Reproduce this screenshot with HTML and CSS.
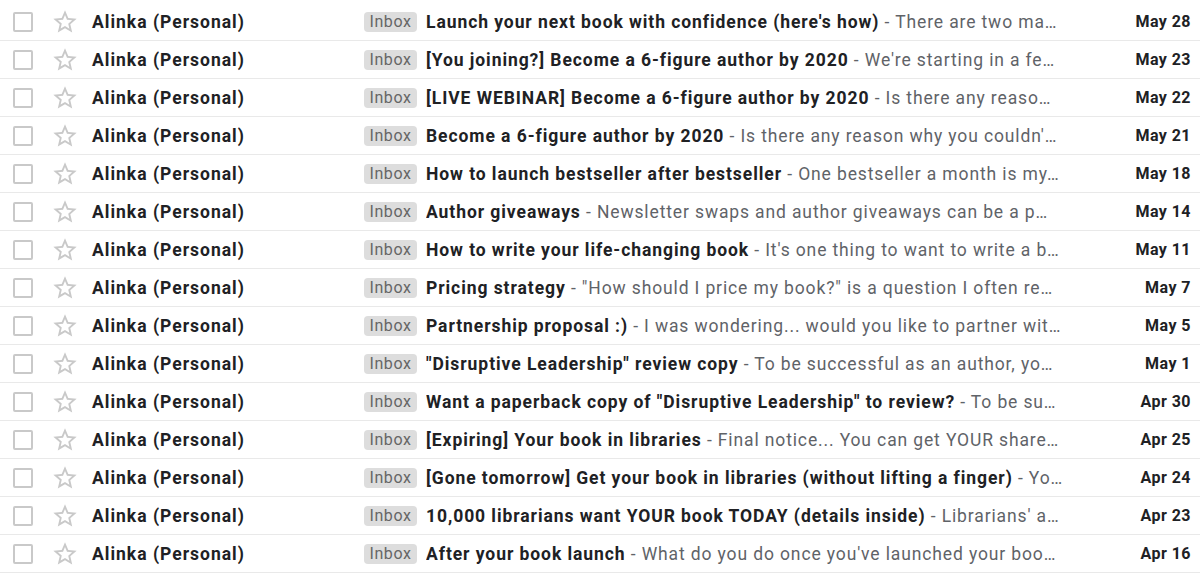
FILE: index.html
```html
<!DOCTYPE html>
<html>
<head>
  <title>Inbox</title>
  <link rel="stylesheet" href="styles.css">
</head>
<body>
  <div class="mail-list">
    <div class="mail-row">
      <span class="mail-check"></span>
      <svg class="mail-star" viewBox="0 0 24 24"><path d="M22 9.24l-7.19-.62L12 2 9.19 8.63 2 9.24l5.46 4.73L5.82 21 12 17.27 18.18 21l-1.63-7.03L22 9.24zM12 15.4l-3.76 2.27 1-4.28-3.32-2.88 4.38-.38L12 6.1l1.71 4.04 4.38.38-3.32 2.88 1 4.28L12 15.4z"/></svg>
      <span class="mail-sender">Alinka (Personal)</span>
      <span class="mail-label">Inbox</span>
      <span class="mail-text"><span class="mail-subject">Launch your next book with confidence (here's how)</span><span class="mail-snippet"> - There are two ma…</span></span>
      <span class="mail-date">May 28</span>
    </div>
    <div class="mail-row">
      <span class="mail-check"></span>
      <svg class="mail-star" viewBox="0 0 24 24"><path d="M22 9.24l-7.19-.62L12 2 9.19 8.63 2 9.24l5.46 4.73L5.82 21 12 17.27 18.18 21l-1.63-7.03L22 9.24zM12 15.4l-3.76 2.27 1-4.28-3.32-2.88 4.38-.38L12 6.1l1.71 4.04 4.38.38-3.32 2.88 1 4.28L12 15.4z"/></svg>
      <span class="mail-sender">Alinka (Personal)</span>
      <span class="mail-label">Inbox</span>
      <span class="mail-text"><span class="mail-subject">[You joining?] Become a 6-figure author by 2020</span><span class="mail-snippet"> - We're starting in a fe…</span></span>
      <span class="mail-date">May 23</span>
    </div>
    <div class="mail-row">
      <span class="mail-check"></span>
      <svg class="mail-star" viewBox="0 0 24 24"><path d="M22 9.24l-7.19-.62L12 2 9.19 8.63 2 9.24l5.46 4.73L5.82 21 12 17.27 18.18 21l-1.63-7.03L22 9.24zM12 15.4l-3.76 2.27 1-4.28-3.32-2.88 4.38-.38L12 6.1l1.71 4.04 4.38.38-3.32 2.88 1 4.28L12 15.4z"/></svg>
      <span class="mail-sender">Alinka (Personal)</span>
      <span class="mail-label">Inbox</span>
      <span class="mail-text"><span class="mail-subject">[LIVE WEBINAR] Become a 6-figure author by 2020</span><span class="mail-snippet"> - Is there any reaso…</span></span>
      <span class="mail-date">May 22</span>
    </div>
    <div class="mail-row">
      <span class="mail-check"></span>
      <svg class="mail-star" viewBox="0 0 24 24"><path d="M22 9.24l-7.19-.62L12 2 9.19 8.63 2 9.24l5.46 4.73L5.82 21 12 17.27 18.18 21l-1.63-7.03L22 9.24zM12 15.4l-3.76 2.27 1-4.28-3.32-2.88 4.38-.38L12 6.1l1.71 4.04 4.38.38-3.32 2.88 1 4.28L12 15.4z"/></svg>
      <span class="mail-sender">Alinka (Personal)</span>
      <span class="mail-label">Inbox</span>
      <span class="mail-text"><span class="mail-subject">Become a 6-figure author by 2020</span><span class="mail-snippet"> - Is there any reason why you couldn'…</span></span>
      <span class="mail-date">May 21</span>
    </div>
    <div class="mail-row">
      <span class="mail-check"></span>
      <svg class="mail-star" viewBox="0 0 24 24"><path d="M22 9.24l-7.19-.62L12 2 9.19 8.63 2 9.24l5.46 4.73L5.82 21 12 17.27 18.18 21l-1.63-7.03L22 9.24zM12 15.4l-3.76 2.27 1-4.28-3.32-2.88 4.38-.38L12 6.1l1.71 4.04 4.38.38-3.32 2.88 1 4.28L12 15.4z"/></svg>
      <span class="mail-sender">Alinka (Personal)</span>
      <span class="mail-label">Inbox</span>
      <span class="mail-text"><span class="mail-subject">How to launch bestseller after bestseller</span><span class="mail-snippet"> - One bestseller a month is my…</span></span>
      <span class="mail-date">May 18</span>
    </div>
    <div class="mail-row">
      <span class="mail-check"></span>
      <svg class="mail-star" viewBox="0 0 24 24"><path d="M22 9.24l-7.19-.62L12 2 9.19 8.63 2 9.24l5.46 4.73L5.82 21 12 17.27 18.18 21l-1.63-7.03L22 9.24zM12 15.4l-3.76 2.27 1-4.28-3.32-2.88 4.38-.38L12 6.1l1.71 4.04 4.38.38-3.32 2.88 1 4.28L12 15.4z"/></svg>
      <span class="mail-sender">Alinka (Personal)</span>
      <span class="mail-label">Inbox</span>
      <span class="mail-text"><span class="mail-subject">Author giveaways</span><span class="mail-snippet"> - Newsletter swaps and author giveaways can be a p…</span></span>
      <span class="mail-date">May 14</span>
    </div>
    <div class="mail-row">
      <span class="mail-check"></span>
      <svg class="mail-star" viewBox="0 0 24 24"><path d="M22 9.24l-7.19-.62L12 2 9.19 8.63 2 9.24l5.46 4.73L5.82 21 12 17.27 18.18 21l-1.63-7.03L22 9.24zM12 15.4l-3.76 2.27 1-4.28-3.32-2.88 4.38-.38L12 6.1l1.71 4.04 4.38.38-3.32 2.88 1 4.28L12 15.4z"/></svg>
      <span class="mail-sender">Alinka (Personal)</span>
      <span class="mail-label">Inbox</span>
      <span class="mail-text"><span class="mail-subject">How to write your life-changing book</span><span class="mail-snippet"> - It's one thing to want to write a b…</span></span>
      <span class="mail-date">May 11</span>
    </div>
    <div class="mail-row">
      <span class="mail-check"></span>
      <svg class="mail-star" viewBox="0 0 24 24"><path d="M22 9.24l-7.19-.62L12 2 9.19 8.63 2 9.24l5.46 4.73L5.82 21 12 17.27 18.18 21l-1.63-7.03L22 9.24zM12 15.4l-3.76 2.27 1-4.28-3.32-2.88 4.38-.38L12 6.1l1.71 4.04 4.38.38-3.32 2.88 1 4.28L12 15.4z"/></svg>
      <span class="mail-sender">Alinka (Personal)</span>
      <span class="mail-label">Inbox</span>
      <span class="mail-text"><span class="mail-subject">Pricing strategy</span><span class="mail-snippet"> - "How should I price my book?" is a question I often re…</span></span>
      <span class="mail-date">May 7</span>
    </div>
    <div class="mail-row">
      <span class="mail-check"></span>
      <svg class="mail-star" viewBox="0 0 24 24"><path d="M22 9.24l-7.19-.62L12 2 9.19 8.63 2 9.24l5.46 4.73L5.82 21 12 17.27 18.18 21l-1.63-7.03L22 9.24zM12 15.4l-3.76 2.27 1-4.28-3.32-2.88 4.38-.38L12 6.1l1.71 4.04 4.38.38-3.32 2.88 1 4.28L12 15.4z"/></svg>
      <span class="mail-sender">Alinka (Personal)</span>
      <span class="mail-label">Inbox</span>
      <span class="mail-text"><span class="mail-subject">Partnership proposal :)</span><span class="mail-snippet"> - I was wondering... would you like to partner wit…</span></span>
      <span class="mail-date">May 5</span>
    </div>
    <div class="mail-row">
      <span class="mail-check"></span>
      <svg class="mail-star" viewBox="0 0 24 24"><path d="M22 9.24l-7.19-.62L12 2 9.19 8.63 2 9.24l5.46 4.73L5.82 21 12 17.27 18.18 21l-1.63-7.03L22 9.24zM12 15.4l-3.76 2.27 1-4.28-3.32-2.88 4.38-.38L12 6.1l1.71 4.04 4.38.38-3.32 2.88 1 4.28L12 15.4z"/></svg>
      <span class="mail-sender">Alinka (Personal)</span>
      <span class="mail-label">Inbox</span>
      <span class="mail-text"><span class="mail-subject">"Disruptive Leadership" review copy</span><span class="mail-snippet"> - To be successful as an author, yo…</span></span>
      <span class="mail-date">May 1</span>
    </div>
    <div class="mail-row">
      <span class="mail-check"></span>
      <svg class="mail-star" viewBox="0 0 24 24"><path d="M22 9.24l-7.19-.62L12 2 9.19 8.63 2 9.24l5.46 4.73L5.82 21 12 17.27 18.18 21l-1.63-7.03L22 9.24zM12 15.4l-3.76 2.27 1-4.28-3.32-2.88 4.38-.38L12 6.1l1.71 4.04 4.38.38-3.32 2.88 1 4.28L12 15.4z"/></svg>
      <span class="mail-sender">Alinka (Personal)</span>
      <span class="mail-label">Inbox</span>
      <span class="mail-text"><span class="mail-subject">Want a paperback copy of "Disruptive Leadership" to review?</span><span class="mail-snippet"> - To be su…</span></span>
      <span class="mail-date">Apr 30</span>
    </div>
    <div class="mail-row">
      <span class="mail-check"></span>
      <svg class="mail-star" viewBox="0 0 24 24"><path d="M22 9.24l-7.19-.62L12 2 9.19 8.63 2 9.24l5.46 4.73L5.82 21 12 17.27 18.18 21l-1.63-7.03L22 9.24zM12 15.4l-3.76 2.27 1-4.28-3.32-2.88 4.38-.38L12 6.1l1.71 4.04 4.38.38-3.32 2.88 1 4.28L12 15.4z"/></svg>
      <span class="mail-sender">Alinka (Personal)</span>
      <span class="mail-label">Inbox</span>
      <span class="mail-text"><span class="mail-subject">[Expiring] Your book in libraries</span><span class="mail-snippet"> - Final notice... You can get YOUR share…</span></span>
      <span class="mail-date">Apr 25</span>
    </div>
    <div class="mail-row">
      <span class="mail-check"></span>
      <svg class="mail-star" viewBox="0 0 24 24"><path d="M22 9.24l-7.19-.62L12 2 9.19 8.63 2 9.24l5.46 4.73L5.82 21 12 17.27 18.18 21l-1.63-7.03L22 9.24zM12 15.4l-3.76 2.27 1-4.28-3.32-2.88 4.38-.38L12 6.1l1.71 4.04 4.38.38-3.32 2.88 1 4.28L12 15.4z"/></svg>
      <span class="mail-sender">Alinka (Personal)</span>
      <span class="mail-label">Inbox</span>
      <span class="mail-text"><span class="mail-subject">[Gone tomorrow] Get your book in libraries (without lifting a finger)</span><span class="mail-snippet"> - Yo…</span></span>
      <span class="mail-date">Apr 24</span>
    </div>
    <div class="mail-row">
      <span class="mail-check"></span>
      <svg class="mail-star" viewBox="0 0 24 24"><path d="M22 9.24l-7.19-.62L12 2 9.19 8.63 2 9.24l5.46 4.73L5.82 21 12 17.27 18.18 21l-1.63-7.03L22 9.24zM12 15.4l-3.76 2.27 1-4.28-3.32-2.88 4.38-.38L12 6.1l1.71 4.04 4.38.38-3.32 2.88 1 4.28L12 15.4z"/></svg>
      <span class="mail-sender">Alinka (Personal)</span>
      <span class="mail-label">Inbox</span>
      <span class="mail-text"><span class="mail-subject">10,000 librarians want YOUR book TODAY (details inside)</span><span class="mail-snippet"> - Librarians' a…</span></span>
      <span class="mail-date">Apr 23</span>
    </div>
    <div class="mail-row">
      <span class="mail-check"></span>
      <svg class="mail-star" viewBox="0 0 24 24"><path d="M22 9.24l-7.19-.62L12 2 9.19 8.63 2 9.24l5.46 4.73L5.82 21 12 17.27 18.18 21l-1.63-7.03L22 9.24zM12 15.4l-3.76 2.27 1-4.28-3.32-2.88 4.38-.38L12 6.1l1.71 4.04 4.38.38-3.32 2.88 1 4.28L12 15.4z"/></svg>
      <span class="mail-sender">Alinka (Personal)</span>
      <span class="mail-label">Inbox</span>
      <span class="mail-text"><span class="mail-subject">After your book launch</span><span class="mail-snippet"> - What do you do once you've launched your boo…</span></span>
      <span class="mail-date">Apr 16</span>
    </div>
  </div>
</body>
</html>
```

FILE: styles.css
```css
:root {
  --color-text: #202124;
  --color-snippet: #5f6368;
  --color-line: #e9e9e9;
  --color-icon: #c9c9c9;
  --color-chip: #dddddd;
  --color-chip-text: #666666;

  --font-family: Roboto, "Liberation Sans", Arial, sans-serif;
}

body {
  margin: 0;
  background-color: #ffffff;
  font-family: var(--font-family);
  color: var(--color-text);
}

.mail-list {
  padding-top: 3px;
}

.mail-row {
  display: flex;
  align-items: center;
  height: 37px;
  border-bottom: 1px solid var(--color-line);
  padding-left: 13px;
  padding-right: 9px;
}

.mail-check {
  flex: none;
  width: 20px;
  height: 20px;
  box-sizing: border-box;
  border: 2px solid var(--color-icon);
  border-radius: 2px;
}

.mail-star {
  flex: none;
  width: 28px;
  height: 28px;
  margin-left: 18px;
  fill: var(--color-icon);
}

.mail-sender {
  flex: none;
  width: 272px;
  margin-left: 13px;
  font-size: 17.5px;
  font-weight: 700;
  letter-spacing: 1px;
  white-space: nowrap;
}

/* Label chip */
.mail-label {
  flex: none;
  width: 53px;
  height: 20px;
  line-height: 20px;
  text-align: center;
  border-radius: 4px;
  background-color: var(--color-chip);
  color: var(--color-chip-text);
  font-size: 16px;
  letter-spacing: 0.6px;
}

.mail-text {
  flex: 1;
  min-width: 0;
  margin-left: 9px;
  font-size: 17.5px;
  letter-spacing: 0.87px;
  white-space: nowrap;
  overflow: hidden;
  text-overflow: ellipsis;
  color: var(--color-snippet);
}

.mail-subject {
  font-weight: 700;
  letter-spacing: 0.93px;
  color: var(--color-text);
}

.mail-date {
  flex: none;
  width: 128px;
  text-align: right;
  font-size: 16px;
  font-weight: 700;
  letter-spacing: 0.45px;
}
```
